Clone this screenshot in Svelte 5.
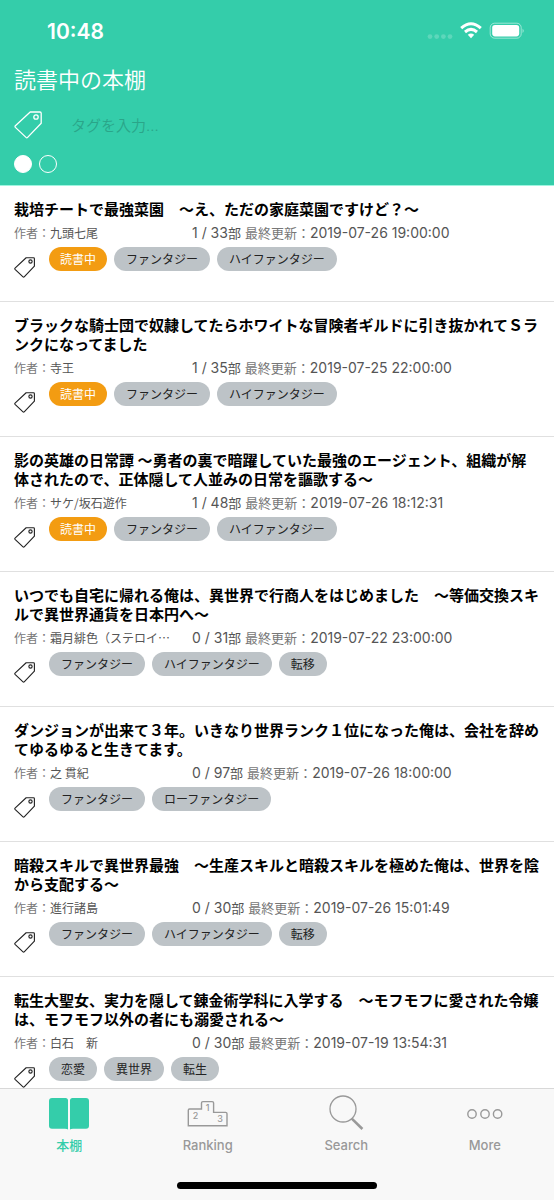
<script lang="ts">
  type Book = {
    title: string;
    author: string;
    read: number;
    total: number;
    updated: string;
    reading?: boolean;
    tags: string[];
  };

  const books: Book[] = [
    { title: '栽培チートで最強菜園　～え、ただの家庭菜園ですけど？～', author: '九頭七尾', read: 1, total: 33, updated: '2019-07-26 19:00:00', reading: true, tags: ['ファンタジー', 'ハイファンタジー'] },
    { title: 'ブラックな騎士団で奴隷してたらホワイトな冒険者ギルドに引き抜かれてＳランクになってました', author: '寺王', read: 1, total: 35, updated: '2019-07-25 22:00:00', reading: true, tags: ['ファンタジー', 'ハイファンタジー'] },
    { title: '影の英雄の日常譚 ～勇者の裏で暗躍していた最強のエージェント、組織が解体されたので、正体隠して人並みの日常を謳歌する～', author: 'サケ/坂石遊作', read: 1, total: 48, updated: '2019-07-26 18:12:31', reading: true, tags: ['ファンタジー', 'ハイファンタジー'] },
    { title: 'いつでも自宅に帰れる俺は、異世界で行商人をはじめました　～等価交換スキルで異世界通貨を日本円へ～', author: '霜月緋色（ステロイ…', read: 0, total: 31, updated: '2019-07-22 23:00:00', tags: ['ファンタジー', 'ハイファンタジー', '転移'] },
    { title: 'ダンジョンが出来て３年。いきなり世界ランク１位になった俺は、会社を辞めてゆるゆると生きてます。', author: '之 貫紀', read: 0, total: 97, updated: '2019-07-26 18:00:00', tags: ['ファンタジー', 'ローファンタジー'] },
    { title: '暗殺スキルで異世界最強　～生産スキルと暗殺スキルを極めた俺は、世界を陰から支配する～', author: '進行諸島', read: 0, total: 30, updated: '2019-07-26 15:01:49', tags: ['ファンタジー', 'ハイファンタジー', '転移'] },
    { title: '転生大聖女、実力を隠して錬金術学科に入学する　～モフモフに愛された令嬢は、モフモフ以外の者にも溺愛される～', author: '白石　新', read: 0, total: 30, updated: '2019-07-19 13:54:31', tags: ['恋愛', '異世界', '転生'] }
  ];

  let tag = $state('');
  let page = $state(0);
  let tab = $state('本棚');
</script>

{#snippet tagIcon(size: number, stroke: number)}
  <svg class="tag-icon" width={size} height={size} viewBox="0 0 28 28" fill="none" stroke="currentColor" stroke-width={stroke} stroke-linejoin="round" aria-hidden="true">
    <path d="M16.2 1 H26 Q27.2 1 27.2 2.2 V12.2 L13.6 26.4 Q12.8 27.2 12 26.4 L1.4 16.4 Q.6 15.6 1.4 14.8 Z" />
    <circle cx="22" cy="6" r="2.2" />
  </svg>
{/snippet}

<div class="app">
  <header>
    <div class="status">
      <span class="time">10:48</span>
      <svg width="98" height="18" viewBox="0 0 98 18" fill="#fff" aria-hidden="true">
        <g opacity=".2">
          <circle cx="4" cy="14.6" r="2.4" />
          <circle cx="10.7" cy="14.6" r="2.4" />
          <circle cx="17.4" cy="14.6" r="2.4" />
          <circle cx="24" cy="14.6" r="2.4" />
        </g>
        <g fill="none" stroke="#fff" stroke-width="3">
          <path d="M35.2 6.2 Q45 -2.6 54.8 6.2" />
          <path d="M39 10 Q45 4.8 51 10" />
        </g>
        <path d="M41.8 12.8 Q45 10.2 48.2 12.8 L45 16.2 Z" />
        <rect x="64.2" y="1.2" width="31" height="15" rx="4.4" fill="none" stroke="#fff" stroke-opacity=".5" />
        <rect x="66.2" y="3" width="27" height="11.4" rx="2.8" />
        <path d="M96.6 6.4 Q98.6 8.7 96.6 11 Z" opacity=".6" />
      </svg>
    </div>
    <h1>読書中の本棚</h1>
    <label class="filter">
      {@render tagIcon(28, 1.3)}
      <input type="text" placeholder="タグを入力..." aria-label="タグ" bind:value={tag} />
    </label>
    <div class="pages">
      {#each [0, 1] as i}
        <button class:current={page === i} aria-label="{i + 1}" onclick={() => (page = i)}></button>
      {/each}
    </div>
  </header>

  <main>
    {#each books as book}
      <article>
        <h2>{book.title}</h2>
        <div class="meta">
          <span class="author"><span class="label">作者：</span>{book.author}</span>
          <span><span class="num">{book.read} / {book.total}</span>部</span>
          <span><span class="label">最終更新：</span><time class="num">{book.updated}</time></span>
        </div>
        <div class="tags">
          {@render tagIcon(21, 1.5)}
          {#if book.reading}
            <span class="pill reading">読書中</span>
          {/if}
          {#each book.tags as t}
            <span class="pill">{t}</span>
          {/each}
        </div>
      </article>
    {/each}
  </main>

  <nav>
    <div class="tabs">
      <button class:active={tab === '本棚'} onclick={() => (tab = '本棚')}>
        <svg width="42" height="34" viewBox="0 0 42 34" aria-hidden="true">
          <path fill="currentColor" d="M4 1 H17.5 Q20 1 20 3.5 V32.5 Q19 31.8 17 31.8 H4 Q1 31.8 1 28.8 V4 Q1 1 4 1 Z M24.5 1 H38 Q41 1 41 4 V28.8 Q41 31.8 38 31.8 H25 Q23 31.8 22 32.5 V3.5 Q22 1 24.5 1 Z" />
        </svg>
        本棚
      </button>
      <button class:active={tab === 'Ranking'} onclick={() => (tab = 'Ranking')}>
        <svg width="42" height="34" viewBox="0 0 42 34" aria-hidden="true">
          <path d="M2.5 12 H14.5 V6 Q14.5 4.6 15.9 4.6 H25.2 Q26.6 4.6 26.6 6 V15.4 H38.6 Q40 15.4 40 16.8 V28.8 H1.3 V13.2 Q1.3 12 2.5 12" fill="none" stroke="currentColor" stroke-width="1.4" />
          <g fill="currentColor" font-size="9" font-weight="500" text-anchor="middle">
            <text x="8.5" y="21.5">2</text>
            <text x="20.5" y="14">1</text>
            <text x="33" y="25">3</text>
          </g>
        </svg>
        Ranking
      </button>
      <button class:active={tab === 'Search'} onclick={() => (tab = 'Search')}>
        <svg width="42" height="36" viewBox="0 0 42 36" fill="none" stroke="currentColor" aria-hidden="true">
          <circle cx="18" cy="14" r="13" stroke-width="1.3" />
          <path d="M26.8 23.6 L37.4 34" stroke-width="2.6" />
        </svg>
        Search
      </button>
      <button class:active={tab === 'More'} onclick={() => (tab = 'More')}>
        <svg width="42" height="34" viewBox="0 0 42 34" fill="none" stroke="currentColor" stroke-width="1.4" aria-hidden="true">
          <circle cx="8" cy="17" r="4.2" />
          <circle cx="21" cy="17" r="4.2" />
          <circle cx="33.6" cy="17" r="4.2" />
        </svg>
        More
      </button>
    </div>
    <div class="home"></div>
  </nav>
</div>

<style>
  :global(body) {
    margin: 0;
    font-family: Inter, "Noto Sans CJK JP", sans-serif;
    background: #fff;
  }

  .app {
    display: flex;
    flex-direction: column;
    height: 100vh;
  }

  header {
    box-sizing: border-box;
    flex: none;
    padding: 16px 14px 12px;
    background: #34cdaa;
    border-bottom: 1px solid #9ff5e0;
    color: #fff;
  }

  .status {
    display: flex;
    align-items: center;
    justify-content: space-between;
    height: 30px;
    padding: 0 16px 0 33px;
  }

  .time {
    font-size: 21px;
    font-weight: 600;
  }

  h1 {
    margin: 18px 0 14px;
    font-size: 22px;
    font-weight: 350;
    line-height: 32px;
  }

  .filter {
    display: flex;
    align-items: center;
    gap: 29px;
    height: 30px;
  }

  .filter input {
    flex: 1;
    min-width: 0;
    padding: 0;
    border: 0;
    outline: 0;
    background: none;
    color: #fff;
    font-family: inherit;
    font-size: 15px;
    font-weight: 350;
  }

  .filter input::placeholder {
    color: #2aa589;
  }

  .pages {
    display: flex;
    gap: 7px;
    margin-top: 15px;
  }

  .pages button {
    box-sizing: border-box;
    width: 18px;
    height: 18px;
    padding: 0;
    border: 1px solid #fff;
    border-radius: 50%;
    background: none;
  }

  .pages button.current {
    background: #fff;
  }

  main {
    flex: 1;
    min-height: 0;
    overflow-y: auto;
    scrollbar-width: none;
  }

  article {
    padding: 13px 14px 30px;
    border-bottom: 1px solid #e0e0e0;
  }

  h2 {
    margin: 0 0 5px;
    color: #000;
    font-family: "Noto Sans CJK JP", sans-serif;
    font-size: 15px;
    font-weight: 700;
    line-height: 19px;
  }

  .meta {
    display: flex;
    align-items: baseline;
    gap: 4px;
    height: 20px;
    color: #555;
    font-family: "Noto Sans CJK JP", sans-serif;
    font-size: 13px;
    line-height: 20px;
    white-space: nowrap;
  }

  .author {
    width: 174px;
    overflow: hidden;
    font-size: 12px;
    text-overflow: ellipsis;
  }

  .label {
    color: #777;
  }

  .num {
    font-family: Inter, sans-serif;
    font-size: 14px;
  }

  .tags {
    display: flex;
    gap: 7px;
    height: 24px;
    margin-top: 4px;
  }

  .tag-icon {
    flex: none;
  }

  .tags .tag-icon {
    margin: 10px 7px 0 0;
    color: #222;
  }

  .pill {
    padding: 0 12px;
    border-radius: 12px;
    background: #bdc3c7;
    color: #222;
    font-size: 12px;
    line-height: 25px;
  }

  .reading {
    padding: 0 11px;
    background: #f39c12;
    color: #fff;
  }

  nav {
    box-sizing: border-box;
    display: flex;
    flex: none;
    flex-direction: column;
    justify-content: space-between;
    height: 112px;
    padding-bottom: 11px;
    border-top: 1px solid #d8d8d8;
    background: #f8f8f8;
  }

  .tabs {
    display: flex;
    align-items: flex-end;
    padding-top: 6px;
  }

  .tabs button {
    display: flex;
    flex: 1;
    flex-direction: column;
    align-items: center;
    gap: 4px;
    padding: 0;
    border: 0;
    background: none;
    color: #999;
    font-family: inherit;
    font-size: 13px;
    font-weight: 500;
    line-height: 20px;
  }

  .tabs button.active {
    color: #34cdaa;
  }

  .home {
    align-self: center;
    width: 36%;
    height: 7px;
    border-radius: 4px;
    background: #000;
  }
</style>
